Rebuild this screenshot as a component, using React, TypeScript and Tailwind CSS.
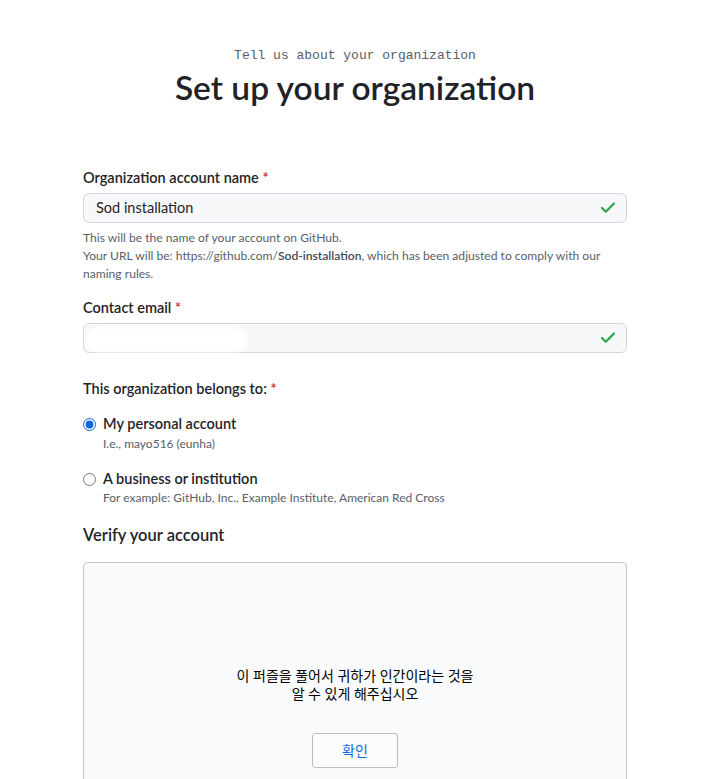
import { Check } from 'lucide-react';

const font = { fontFamily: 'Lato, "Noto Sans CJK KR", sans-serif' };

function Label({ children }: { children: React.ReactNode }) {
  return (
    <label className="block text-[14.5px] font-semibold text-[#1f2328] leading-5 mb-[5px]">
      {children} <span className="text-[#cf222e]">*</span>
    </label>
  );
}

function CheckField({ value, blurred }: { value?: string; blurred?: boolean }) {
  return (
    <div className="relative h-[30px] rounded-md border border-[#d0d7de] bg-[#f6f8fa] flex items-center px-3">
      <span className="text-[14.5px] text-[#1f2328]">{value}</span>
      {blurred && (
        <div className="absolute left-[2px] top-[4px] h-[24px] w-[160px] bg-white blur-[2px] rounded-full" />
      )}
      <Check className="absolute right-[9px] top-[5px] text-[#2da44e]" size={18} strokeWidth={3} />
    </div>
  );
}

export default function App() {
  return (
    <div className="min-h-screen bg-white" style={font}>
      <div className="w-[544px] ml-[83px] pt-[46px]">
        {/* Header */}
        <div className="text-center">
          <p className="text-[13px] text-[#57606a] leading-5" style={{ fontFamily: '"Liberation Mono", monospace' }}>
            Tell us about your organization
          </p>
          <h1 className="text-[33.5px] font-semibold text-[#1f2328] leading-[44px] -mt-[1px]">Set up your organization</h1>
        </div>

        <form className="mt-[59px]">
          {/* Org name */}
          <div>
            <Label>Organization account name</Label>
            <CheckField value="Sod installation" />
            <p className="text-[12.1px] text-[#57606a] leading-[18px] mt-[6px]">
              This will be the name of your account on GitHub.
              <br />
              Your URL will be: https://github.com/<strong className="font-semibold text-[#424a53]">Sod-installation</strong>,
              which has been adjusted to comply with our naming rules.
            </p>
          </div>

          {/* Email */}
          <div className="mt-[15px]">
            <Label>Contact email</Label>
            <CheckField blurred />
          </div>

          {/* Belongs to */}
          <div className="mt-[26px]">
            <Label>This organization belongs to:</Label>
            <div className="mt-[15px] space-y-[16px]">
              <div className="flex items-start gap-[7px]">
                <input type="radio" name="owner" defaultChecked className="mt-[4px] w-[13px] h-[13px] accent-[#0969da]" />
                <div>
                  <div className="text-[14.5px] font-semibold text-[#1f2328] leading-5">My personal account</div>
                  <div className="text-[12px] text-[#57606a] leading-[18px] mt-[1px]">I.e., mayo516 (eunha)</div>
                </div>
              </div>
              <div className="flex items-start gap-[7px]">
                <input type="radio" name="owner" className="mt-[4px] w-[13px] h-[13px]" />
                <div>
                  <div className="text-[14.5px] font-semibold text-[#1f2328] leading-5">A business or institution</div>
                  <div className="text-[12px] text-[#57606a] leading-[18px]">
                    For example: GitHub, Inc., Example Institute, American Red Cross
                  </div>
                </div>
              </div>
            </div>
          </div>

          {/* Verify */}
          <h2 className="mt-[16px] text-[16.5px] font-semibold text-[#1f2328] leading-6">Verify your account</h2>
          <div className="mt-[15px] h-[260px] rounded border border-[#c6c6c6] bg-[#f9fafb] flex flex-col items-center pt-[104px]">
            <p className="text-[14px] text-black leading-[18px] text-center">
              이 퍼즐을 풀어서 귀하가 인간이라는 것을
              <br />
              알 수 있게 해주십시오
            </p>
            <button
              type="button"
              className="mt-[30px] w-[86px] h-[35px] border border-[#bdbdbd] rounded-[3px] bg-white/40 text-[14px] text-[#0969da]"
            >
              확인
            </button>
          </div>
        </form>
      </div>
    </div>
  );
}
